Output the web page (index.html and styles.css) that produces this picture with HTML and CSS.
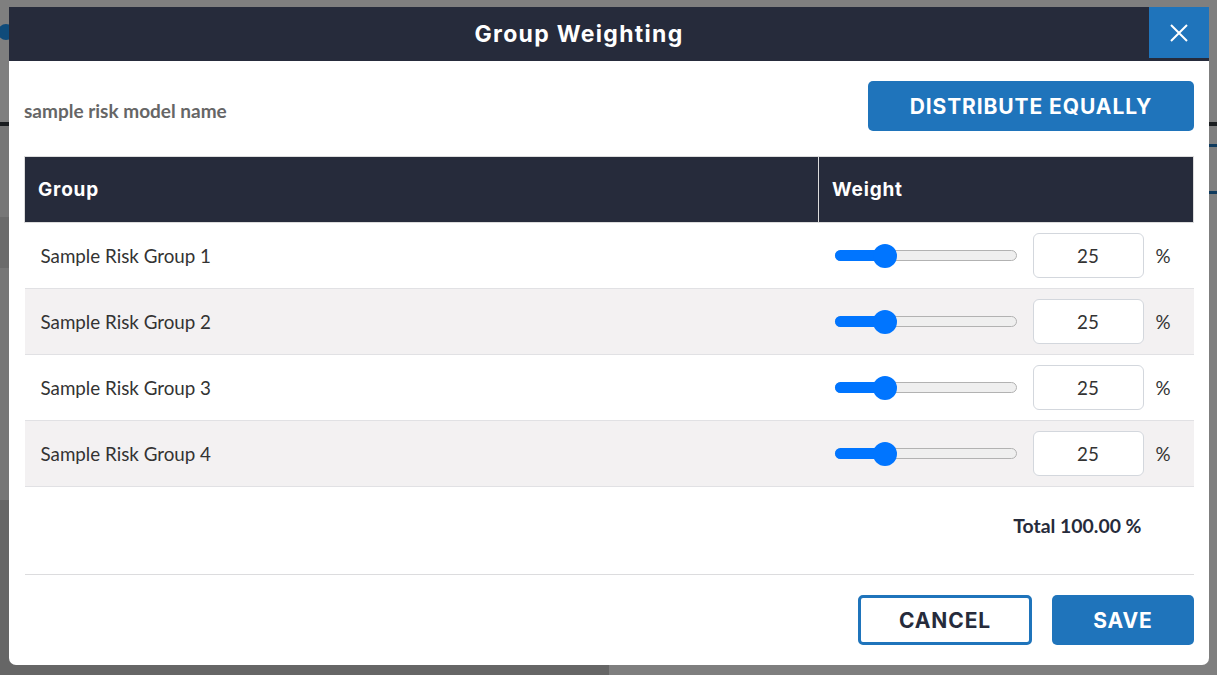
FILE: index.html
```html
<!DOCTYPE html>
<html>
<head>
<meta charset="utf-8">
<link rel="stylesheet" href="styles.css">
</head>
<body>
<div class="page">
  <div class="page-top"><span class="page-dot"></span></div>
  <div class="page-rule"></div>
  <div class="page-main">
    <div class="page-side">
      <div class="side-a"></div>
      <div class="side-b"></div>
      <div class="side-c"></div>
      <div class="side-d"></div>
    </div>
    <div class="page-content">
      <div class="content-line first"></div>
      <div class="content-line second"></div>
    </div>
  </div>
</div>
<div class="overlay"></div>

<div class="modal">
  <div class="modal-header">
    <h1 class="modal-title">Group Weighting</h1>
    <button class="close-btn" aria-label="Close">
      <svg width="20" height="20" viewBox="0 0 20 20"><path d="M2 2 L18 18 M18 2 L2 18" stroke="#fff" stroke-width="2" fill="none"/></svg>
    </button>
  </div>
  <div class="modal-body">
    <div class="toolbar">
      <span class="model-name">sample risk model name</span>
      <button class="btn btn-primary btn-distribute">DISTRIBUTE EQUALLY</button>
    </div>
    <table class="weights">
      <thead>
        <tr><th class="col-group">Group</th><th class="col-weight">Weight</th></tr>
      </thead>
      <tbody>
        <tr>
          <td class="group-name">Sample Risk Group 1</td>
          <td><div class="weight-cell"><div class="slider"><div class="slider-fill" style="width:50px"></div><div class="slider-thumb" style="left:37px"></div></div><div class="num-input">25</div><span class="pct">%</span></div></td>
        </tr>
        <tr class="alt">
          <td class="group-name">Sample Risk Group 2</td>
          <td><div class="weight-cell"><div class="slider"><div class="slider-fill" style="width:50px"></div><div class="slider-thumb" style="left:37px"></div></div><div class="num-input">25</div><span class="pct">%</span></div></td>
        </tr>
        <tr>
          <td class="group-name">Sample Risk Group 3</td>
          <td><div class="weight-cell"><div class="slider"><div class="slider-fill" style="width:50px"></div><div class="slider-thumb" style="left:37px"></div></div><div class="num-input">25</div><span class="pct">%</span></div></td>
        </tr>
        <tr class="alt">
          <td class="group-name">Sample Risk Group 4</td>
          <td><div class="weight-cell"><div class="slider"><div class="slider-fill" style="width:50px"></div><div class="slider-thumb" style="left:37px"></div></div><div class="num-input">25</div><span class="pct">%</span></div></td>
        </tr>
      </tbody>
      <tfoot>
        <tr>
          <td class="foot-empty"></td>
          <td class="foot-total"><span class="total">Total 100.00 %</span></td>
        </tr>
      </tfoot>
    </table>
    <div class="actions">
      <button class="btn btn-outline">CANCEL</button>
      <button class="btn btn-primary btn-save">SAVE</button>
    </div>
  </div>
</div>
</body>
</html>
```

FILE: styles.css
```css
* { box-sizing: border-box; }
html, body { margin: 0; padding: 0; }
body {
  width: 1217px;
  height: 675px;
  overflow: hidden;
  position: relative;
  background: #fff;
  font-family: "Lato", "Noto Sans", sans-serif;
}

/* background page (under overlay) */
.page { width: 1217px; height: 675px; display: flex; flex-direction: column; }
.page-top { height: 122px; background: #fff; position: relative; }
.page-dot {
  position: absolute; left: -2px; top: 24px;
  width: 16px; height: 16px; border-radius: 50%;
  background: #1e96f4;
}
.page-rule { height: 4px; background: #343a40; }
.page-main { flex: 1; display: flex; }
.page-side { width: 609px; display: flex; flex-direction: column; }
.side-a { height: 91px; background: #eeeeee; }
.side-b { height: 51px; background: #d6d6d6; }
.side-c { height: 232px; background: #eeeeee; }
.side-d { flex: 1; background: #cccccc; }
.page-content { flex: 1; background: #fff; padding-top: 18px; }
.content-line { height: 3px; background: #1f74bb; }
.content-line.second { margin-top: 44px; }

.overlay {
  position: absolute; inset: 0;
  background: rgba(0, 0, 0, 0.5);
}

/* modal */
.modal {
  position: absolute;
  left: 9px; top: 7px;
  width: 1200px; height: 658px;
  background: #fff;
  border-radius: 0 0 7px 7px;
}
.modal-header {
  height: 54px;
  background: #262b3b;
  display: flex;
  align-items: center;
  justify-content: center;
  position: relative;
  padding-right: 60px;
}
.modal-title {
  margin: 0;
  color: #fff;
  font-family: "Inter", sans-serif;
  font-weight: 700;
  font-size: 23px;
  letter-spacing: 1.3px;
}
.close-btn {
  position: absolute;
  top: 0; right: 0;
  width: 60px; height: 51px;
  background: #1f74bb;
  border: 0;
  display: flex; align-items: center; justify-content: center;
  padding: 0;
}

.modal-body { padding: 20px 15px 0 15px; }

.toolbar {
  display: flex;
  justify-content: space-between;
  align-items: center;
}
.model-name {
  color: #666;
  font-weight: 700;
  font-size: 19px;
  padding-top: 9px;
}

.btn {
  font-family: "Inter", sans-serif;
  font-weight: 700;
  font-size: 21px;
  letter-spacing: 0.9px;
  height: 50px;
  border-radius: 5px;
  cursor: pointer;
  padding: 0;
}
.btn-primary { background: #1f74bb; color: #fff; border: 0; }
.btn-distribute { width: 326px; }
.btn-outline {
  background: #fff;
  color: #262b3b;
  border: 3px solid #1f74bb;
  width: 174px;
}
.btn-save { width: 142px; }

.weights {
  width: 1170px;
  margin-top: 25px;
  border-collapse: collapse;
  table-layout: fixed;
}
.weights th {
  background: #262b3b;
  color: #fff;
  font-family: "Inter", sans-serif;
  font-weight: 700;
  font-size: 19px;
  letter-spacing: 0.8px;
  text-align: left;
  height: 66px;
  border: 1px solid #dcdcdc;
  padding: 0 0 0 13px;
}
.col-group { width: 794px; }
.weights td {
  height: 66px;
  padding: 0;
  border-bottom: 1px solid #e1e1e4;
  font-size: 18.8px;
  color: #333;
}
.weights tr.alt td { background: #f3f1f2; }
.group-name { padding-left: 16px !important; }

.weight-cell {
  display: flex;
  align-items: center;
  padding-left: 16px;
}
.slider {
  position: relative;
  width: 182px;
  height: 11px;
  border-radius: 6px;
  background: #efefef;
  border: 1px solid #b2b2b2;
}
.slider-fill {
  position: absolute; left: -1px; top: -1px; bottom: -1px;
  background: #0075ff;
  border-radius: 6px 0 0 6px;
}
.slider-thumb {
  position: absolute;
  top: 50%;
  width: 24px; height: 24px;
  margin-top: -12px;
  border-radius: 50%;
  background: #0075ff;
}
.num-input {
  width: 111px;
  height: 45px;
  margin-left: 16px;
  border: 1px solid #d3d7dd;
  border-radius: 6px;
  background: #fff;
  display: flex; align-items: center; justify-content: center;
  font-size: 18.8px;
  color: #333;
}
.pct { margin-left: 12px; font-size: 18.8px; color: #333; }

.weights tfoot td {
  height: 88px;
  border-bottom: 1px solid #dcdcde;
}
.weights tfoot .foot-total {
  border-top: 1px solid #dcdcde;
  text-align: right;
  padding-right: 52px;
  padding-bottom: 10px;
}
.total { font-weight: 700; font-size: 19.4px; color: #262b3b; }

.actions {
  display: flex;
  justify-content: flex-end;
  gap: 20px;
  margin-top: 20px;
}
```
